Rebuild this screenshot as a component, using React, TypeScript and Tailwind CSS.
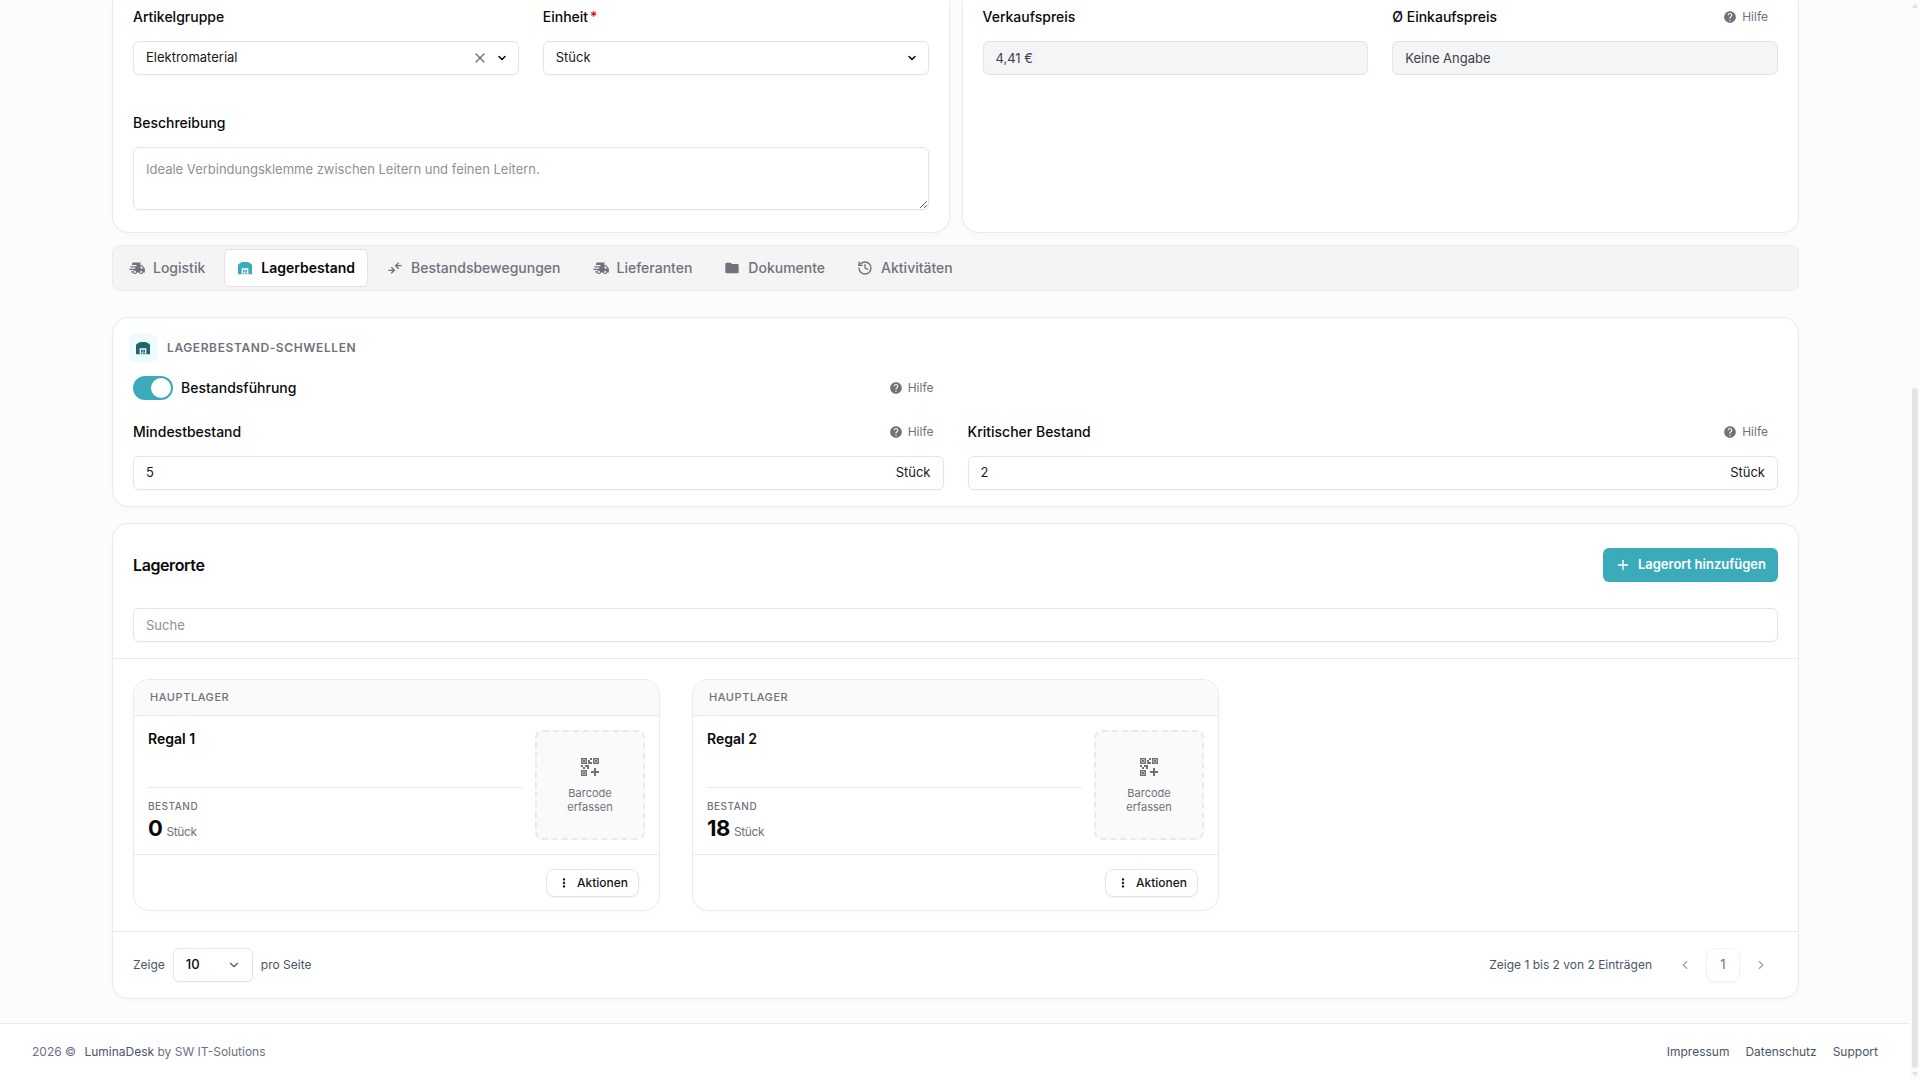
import type { ReactNode } from 'react'
import { useState } from 'react'
import { MdFolder, MdHelp, MdMoreVert } from 'react-icons/md'
import { ChevronDown, ChevronLeft, ChevronRight, History, Plus, X } from 'lucide-react'

type IconProps = { className?: string }

function TruckIcon({ className }: IconProps) {
  return (
    <svg viewBox="1 0 23 23" className={className} fill="currentColor" aria-hidden="true">
      <path
        fillRule="evenodd"
        d="M6 3.500h11.500v4h2.800l3.500 4.800v5.500h-2.300a3.100 3.100 0 0 1-6 0h-3a3.100 3.100 0 0 1-6 0H3.800v-1.800h3.400l.8-1.600H1.200l.8-1.800h7.500l.8-1.800H2.500l.8-1.800h8l.8-1.800H5zM17.500 9.300v3h4.300l-2.200-3zM9.500 15.600a1.500 1.500 0 1 0 0 3 1.500 1.500 0 0 0 0-3zM18.500 15.600a1.500 1.500 0 1 0 0 3 1.500 1.500 0 0 0 0-3z"
      />
    </svg>
  )
}

function WarehouseIcon({ className }: IconProps) {
  return (
    <svg viewBox="0 0 24 24" className={className} fill="currentColor" aria-hidden="true">
      <path
        fillRule="evenodd"
        d="M1.500 8Q1.500 6.300 3 5.500L7 3.500Q8 3 9 3h6q1 0 2 .5l4 2Q22.500 6.300 22.500 8v13.500h-5.500V12.500H7v9H1.500z"
      />
      <path fillRule="evenodd" d="M9 14.500h6v4.200H9zM10.900 15.700v1.700h2.200v-1.700zM8.300 20h2.200v1.500H8.300zM11.900 20h3.800v1.500h-3.800z" />
    </svg>
  )
}

function MovementIcon({ className }: IconProps) {
  return (
    <svg
      viewBox="0 0 24 24"
      className={className}
      fill="none"
      stroke="currentColor"
      strokeWidth="2"
      aria-hidden="true"
    >
      <path d="M2 15.500h8.500M6.500 11l4.500 4.500L6.500 20M22 8.500h-8.500M17.500 4L13 8.500l4.500 4.500" />
    </svg>
  )
}

function QrAddIcon({ className }: IconProps) {
  return (
    <svg viewBox="0 0 18 18" className={className} fill="currentColor" aria-hidden="true">
      <path
        fillRule="evenodd"
        d="M0 0h6v6H0zM1.500 1.500v3h3v-3zM12 0h6v6h-6zM13.500 1.500v3h3v-3zM0 12h6v6H0zM1.500 13.500v3h3v-3z"
      />
      <path d="M2 2h2v2H2zM14 2h2v2h-2zM2 14h2v2H2z" />
      <path d="M9 0h2v2H9zM7 2h2v4H7zM9 4h2v2H9zM0 7h2v2H0zM4 7h4v2H4zM2 9h2v2H2zM6 9h2v2H6zM13 10h2v3h3v2h-3v3h-2v-3h-3v-2h3z" />
    </svg>
  )
}

const tabs = [
  { id: 'logistik', label: 'Logistik', icon: TruckIcon },
  { id: 'lagerbestand', label: 'Lagerbestand', icon: WarehouseIcon },
  { id: 'bewegungen', label: 'Bestandsbewegungen', icon: MovementIcon },
  { id: 'lieferanten', label: 'Lieferanten', icon: TruckIcon },
  { id: 'dokumente', label: 'Dokumente', icon: MdFolder },
  { id: 'aktivitaeten', label: 'Aktivitäten', icon: History },
]

const locations = [
  { warehouse: 'Hauptlager', name: 'Regal 1', stock: 0 },
  { warehouse: 'Hauptlager', name: 'Regal 2', stock: 18 },
]

function HelpButton() {
  return (
    <button type="button" className="flex items-center gap-[5px] px-[10px] text-xs leading-5 text-zinc-500">
      <MdHelp className="size-[14px]" />
      Hilfe
    </button>
  )
}

interface FieldProps {
  id: string
  label: string
  required?: boolean
  help?: boolean
  children: ReactNode
}

function Field({ id, label, required, help, children }: FieldProps) {
  return (
    <div className="flex min-w-0 flex-col gap-[14px]">
      <div className="flex h-5 items-center justify-between">
        <label htmlFor={id} className="text-sm font-medium text-zinc-950">
          {label}
          {required && <span className="ml-[2px] text-red-600">*</span>}
        </label>
        {help && <HelpButton />}
      </div>
      {children}
    </div>
  )
}

const box = 'rounded-md border border-zinc-200 bg-white shadow-[0_1px_2px_rgba(0,0,0,0.03)]'

function StockInput({ id, value }: { id: string; value: string }) {
  return (
    <div className={`${box} flex h-[34px] items-center px-3 text-[13px] text-zinc-900`}>
      <input id={id} defaultValue={value} className="min-w-0 flex-1 outline-none" />
      <span>Stück</span>
    </div>
  )
}

function LocationCard({ warehouse, name, stock }: (typeof locations)[number]) {
  return (
    <article className="overflow-hidden rounded-2xl border border-[#e9eaeb] bg-white shadow-[0_2px_6px_rgba(0,0,0,0.02)]">
      <header className="border-b border-[#e9eaeb] bg-[#fafafa] px-4 py-2 text-[11px] leading-[19px] font-medium tracking-wider text-zinc-500 uppercase">
        {warehouse}
      </header>
      <div className="flex gap-3 border-b border-[#e9eaeb] p-[14px]">
        <div className="flex flex-1 flex-col justify-between">
          <h3 className="text-sm leading-[18px] font-semibold text-zinc-950">{name}</h3>
          <div className="border-t border-[#e9eaeb] pt-3">
            <p className="text-[10px] leading-3 font-medium tracking-wider text-zinc-500 uppercase">Bestand</p>
            <p className="flex items-baseline gap-1 pt-1 leading-6 tracking-tight">
              <span className="text-[22px] font-bold text-zinc-950">{stock}</span>
              <span className="text-xs text-zinc-500">Stück</span>
            </p>
          </div>
        </div>
        <button
          type="button"
          className="flex size-[110px] flex-col items-center justify-center gap-[10px] rounded-lg border-2 border-dashed border-[#e9eaeb] bg-[#fafafa] pt-[2px] text-[11px] leading-[14px] text-zinc-500"
        >
          <QrAddIcon className="size-[18px]" />
          <span className="w-14">Barcode erfassen</span>
        </button>
      </div>
      <footer className="flex justify-end px-5 pt-[14px] pb-[13px]">
        <button
          type="button"
          className="flex h-7 items-center gap-[6px] rounded-lg border border-zinc-200 bg-white px-[10px] text-xs font-medium text-zinc-900 shadow-[0_1px_2px_rgba(0,0,0,0.04)]"
        >
          <MdMoreVert className="size-[14px]" />
          Aktionen
        </button>
      </footer>
    </article>
  )
}

export default function App() {
  const [activeTab, setActiveTab] = useState('lagerbestand')
  const [tracked, setTracked] = useState(true)

  return (
    <div className="flex min-h-screen bg-[#fcfcfc] font-['Inter',sans-serif] text-zinc-950">
      <div className="flex min-w-0 flex-1 flex-col">
        <main className="pr-[111px] pb-6 pl-28">
          <div className="grid grid-cols-2 gap-3">
            <section className="rounded-b-2xl border border-t-0 border-[#e9eaeb] bg-white px-5 pt-[7px] pb-[22px] shadow-[0_2px_8px_rgba(0,0,0,0.02)]">
              <div className="grid grid-cols-2 gap-6">
                <Field id="artikelgruppe" label="Artikelgruppe">
                  <div className={`${box} flex h-[34px] items-center pr-[10px] pl-3 text-[13px]`}>
                    <select id="artikelgruppe" className="min-w-0 flex-1 appearance-none text-zinc-900 outline-none">
                      <option>Elektromaterial</option>
                    </select>
                    <button type="button" aria-label="Auswahl löschen" className="mr-2 text-zinc-500">
                      <X className="size-4" strokeWidth={2} />
                    </button>
                    <ChevronDown className="size-3" strokeWidth={3} />
                  </div>
                </Field>
                <Field id="einheit" label="Einheit" required>
                  <div className={`${box} flex h-[34px] items-center pr-[10px] pl-3 text-[13px]`}>
                    <select id="einheit" className="min-w-0 flex-1 appearance-none text-zinc-900 outline-none">
                      <option>Stück</option>
                    </select>
                    <ChevronDown className="size-3" strokeWidth={3} />
                  </div>
                </Field>
              </div>
              <div className="pt-[38px]">
                <Field id="beschreibung" label="Beschreibung">
                  <textarea
                    id="beschreibung"
                    placeholder="Ideale Verbindungsklemme zwischen Leitern und feinen Leitern."
                    className={`${box} block h-[63px] w-full resize-y px-3 py-[11px] text-[13px] leading-5 outline-none placeholder:text-[#8f8f98]`}
                  />
                </Field>
              </div>
            </section>

            <section className="rounded-b-2xl border border-t-0 border-[#e9eaeb] bg-white px-5 pt-[7px] shadow-[0_2px_8px_rgba(0,0,0,0.02)]">
              <div className="grid grid-cols-2 gap-6">
                <Field id="verkaufspreis" label="Verkaufspreis">
                  <input
                    id="verkaufspreis"
                    readOnly
                    value="4,41 €"
                    className="h-[34px] w-full rounded-md border border-zinc-200 bg-[#f3f5f6] px-3 text-[13px] text-zinc-700 outline-none"
                  />
                </Field>
                <Field id="einkaufspreis" label="Ø Einkaufspreis" help>
                  <input
                    id="einkaufspreis"
                    readOnly
                    value="Keine Angabe"
                    className="h-[34px] w-full rounded-md border border-zinc-200 bg-[#f3f5f6] px-3 text-[13px] text-zinc-700 outline-none"
                  />
                </Field>
              </div>
            </section>
          </div>

          <nav className="mt-3 flex gap-[6px] rounded-lg border border-[#e9eaeb] bg-[#f4f4f4] p-[3px]" role="tablist">
            {tabs.map(({ id, label, icon: Icon }) => (
              <button
                key={id}
                type="button"
                role="tab"
                aria-selected={id === activeTab}
                onClick={() => setActiveTab(id)}
                className={
                  id === activeTab
                    ? 'flex h-[38px] items-center gap-2 rounded-md border border-zinc-200 bg-white px-3 text-sm font-semibold text-zinc-950'
                    : 'flex h-[38px] items-center gap-2 rounded-md border border-transparent px-3 text-sm font-medium text-zinc-500'
                }
              >
                <Icon className={id === activeTab ? 'size-4 text-[#3baab9]' : 'size-4'} />
                {label}
              </button>
            ))}
          </nav>

          <section className="mt-[26px] rounded-2xl border border-[#e9eaeb] bg-white px-5 py-4 shadow-[0_2px_8px_rgba(0,0,0,0.02)]">
            <div className="-ml-1 flex items-center gap-[10px]">
              <span className="flex size-7 items-center justify-center rounded-md bg-[#ecfcfc] text-[#20646c]">
                <WarehouseIcon className="size-4" />
              </span>
              <h2 className="text-xs font-semibold tracking-wider text-zinc-500 uppercase">Lagerbestand-Schwellen</h2>
            </div>

            <div className="grid grid-cols-2 gap-6 pt-[14px]">
              <div className="flex items-center justify-between">
                <label className="flex items-center gap-2 text-sm font-medium">
                  <input
                    type="checkbox"
                    role="switch"
                    checked={tracked}
                    onChange={(e) => setTracked(e.target.checked)}
                    className="h-6 w-10 appearance-none rounded-full bg-zinc-300 p-[2px] before:block before:size-5 before:rounded-full before:bg-white checked:bg-[#3baab9] checked:before:translate-x-4"
                  />
                  Bestandsführung
                </label>
                <HelpButton />
              </div>
            </div>

            <div className="grid grid-cols-2 gap-6 pt-[22px]">
              <Field id="mindestbestand" label="Mindestbestand" help>
                <StockInput id="mindestbestand" value="5" />
              </Field>
              <Field id="kritisch" label="Kritischer Bestand" help>
                <StockInput id="kritisch" value="2" />
              </Field>
            </div>
          </section>

          <section className="mt-4 rounded-2xl border border-[#e9eaeb] bg-white shadow-[0_2px_8px_rgba(0,0,0,0.02)]">
            <div className="border-b border-[#e9eaeb] px-5 pt-6 pb-4">
              <div className="flex items-center justify-between">
                <h2 className="text-base font-semibold tracking-tight">Lagerorte</h2>
                <button
                  type="button"
                  className="flex h-[34px] items-center gap-[7px] rounded-md bg-[#3baab9] px-3 text-[13px] font-semibold text-white"
                >
                  <Plus className="size-4" strokeWidth={2} />
                  Lagerort hinzufügen
                </button>
              </div>
              <input
                type="search"
                aria-label="Suche"
                placeholder="Suche"
                className={`${box} mt-[26px] block h-[34px] w-full px-3 text-[13px] outline-none placeholder:text-[#8f8f98]`}
              />
            </div>

            <div className="grid grid-cols-3 gap-8 p-5">
              {locations.map((location) => (
                <LocationCard key={location.name} {...location} />
              ))}
            </div>

            <div className="flex items-center justify-between border-t border-[#e9eaeb] px-5 py-4 text-xs text-gray-600">
              <div className="flex items-center gap-2">
                <label htmlFor="page-size">Zeige</label>
                <div className={`${box} flex h-[34px] w-20 items-center pr-[11px] pl-3`}>
                  <select
                    id="page-size"
                    className="min-w-0 flex-1 appearance-none text-[13px] font-medium text-zinc-950 outline-none"
                  >
                    <option>10</option>
                  </select>
                  <ChevronDown className="size-[14px]" strokeWidth={2} />
                </div>
                <span>pro Seite</span>
              </div>
              <div className="flex items-center gap-4">
                <span>Zeige 1 bis 2 von 2 Einträgen</span>
                <div className="flex gap-1 text-zinc-400">
                  <button type="button" aria-label="Zurück" className="flex size-[34px] items-center justify-center">
                    <ChevronLeft className="size-[14px]" strokeWidth={2} />
                  </button>
                  <button
                    type="button"
                    className="size-[34px] rounded-lg border border-zinc-100 text-[13px] text-zinc-500 shadow-[0_1px_2px_rgba(0,0,0,0.05)]"
                  >
                    1
                  </button>
                  <button type="button" aria-label="Weiter" className="flex size-[34px] items-center justify-center">
                    <ChevronRight className="size-[14px]" strokeWidth={2} />
                  </button>
                </div>
              </div>
            </div>
          </section>
        </main>

        <footer className="mt-auto flex h-[57px] items-center justify-between border-t border-[#e9eaeb] bg-white px-8 text-xs text-gray-500">
          <p>
            2026 © <a href="#" className="ml-[5px] text-gray-600">LuminaDesk</a> by SW IT-Solutions
          </p>
          <nav className="flex gap-4 text-gray-600">
            <a href="#">Impressum</a>
            <a href="#">Datenschutz</a>
            <a href="#">Support</a>
          </nav>
        </footer>
      </div>

      {/* scrollbar */}
      <div className="flex w-[10px] flex-col items-center bg-[#fcfcfc] py-[3px]" aria-hidden="true">
        <svg viewBox="0 0 6 5" className="h-[5px] w-[6px] fill-zinc-200">
          <path d="M3 0l3 5H0z" />
        </svg>
        <span className="flex-[380]" />
        <span className="w-[6px] flex-[680] rounded-full bg-zinc-200" />
        <svg viewBox="0 0 6 5" className="mt-1 h-[5px] w-[6px] fill-zinc-200">
          <path d="M0 0h6L3 5z" />
        </svg>
      </div>
    </div>
  )
}
